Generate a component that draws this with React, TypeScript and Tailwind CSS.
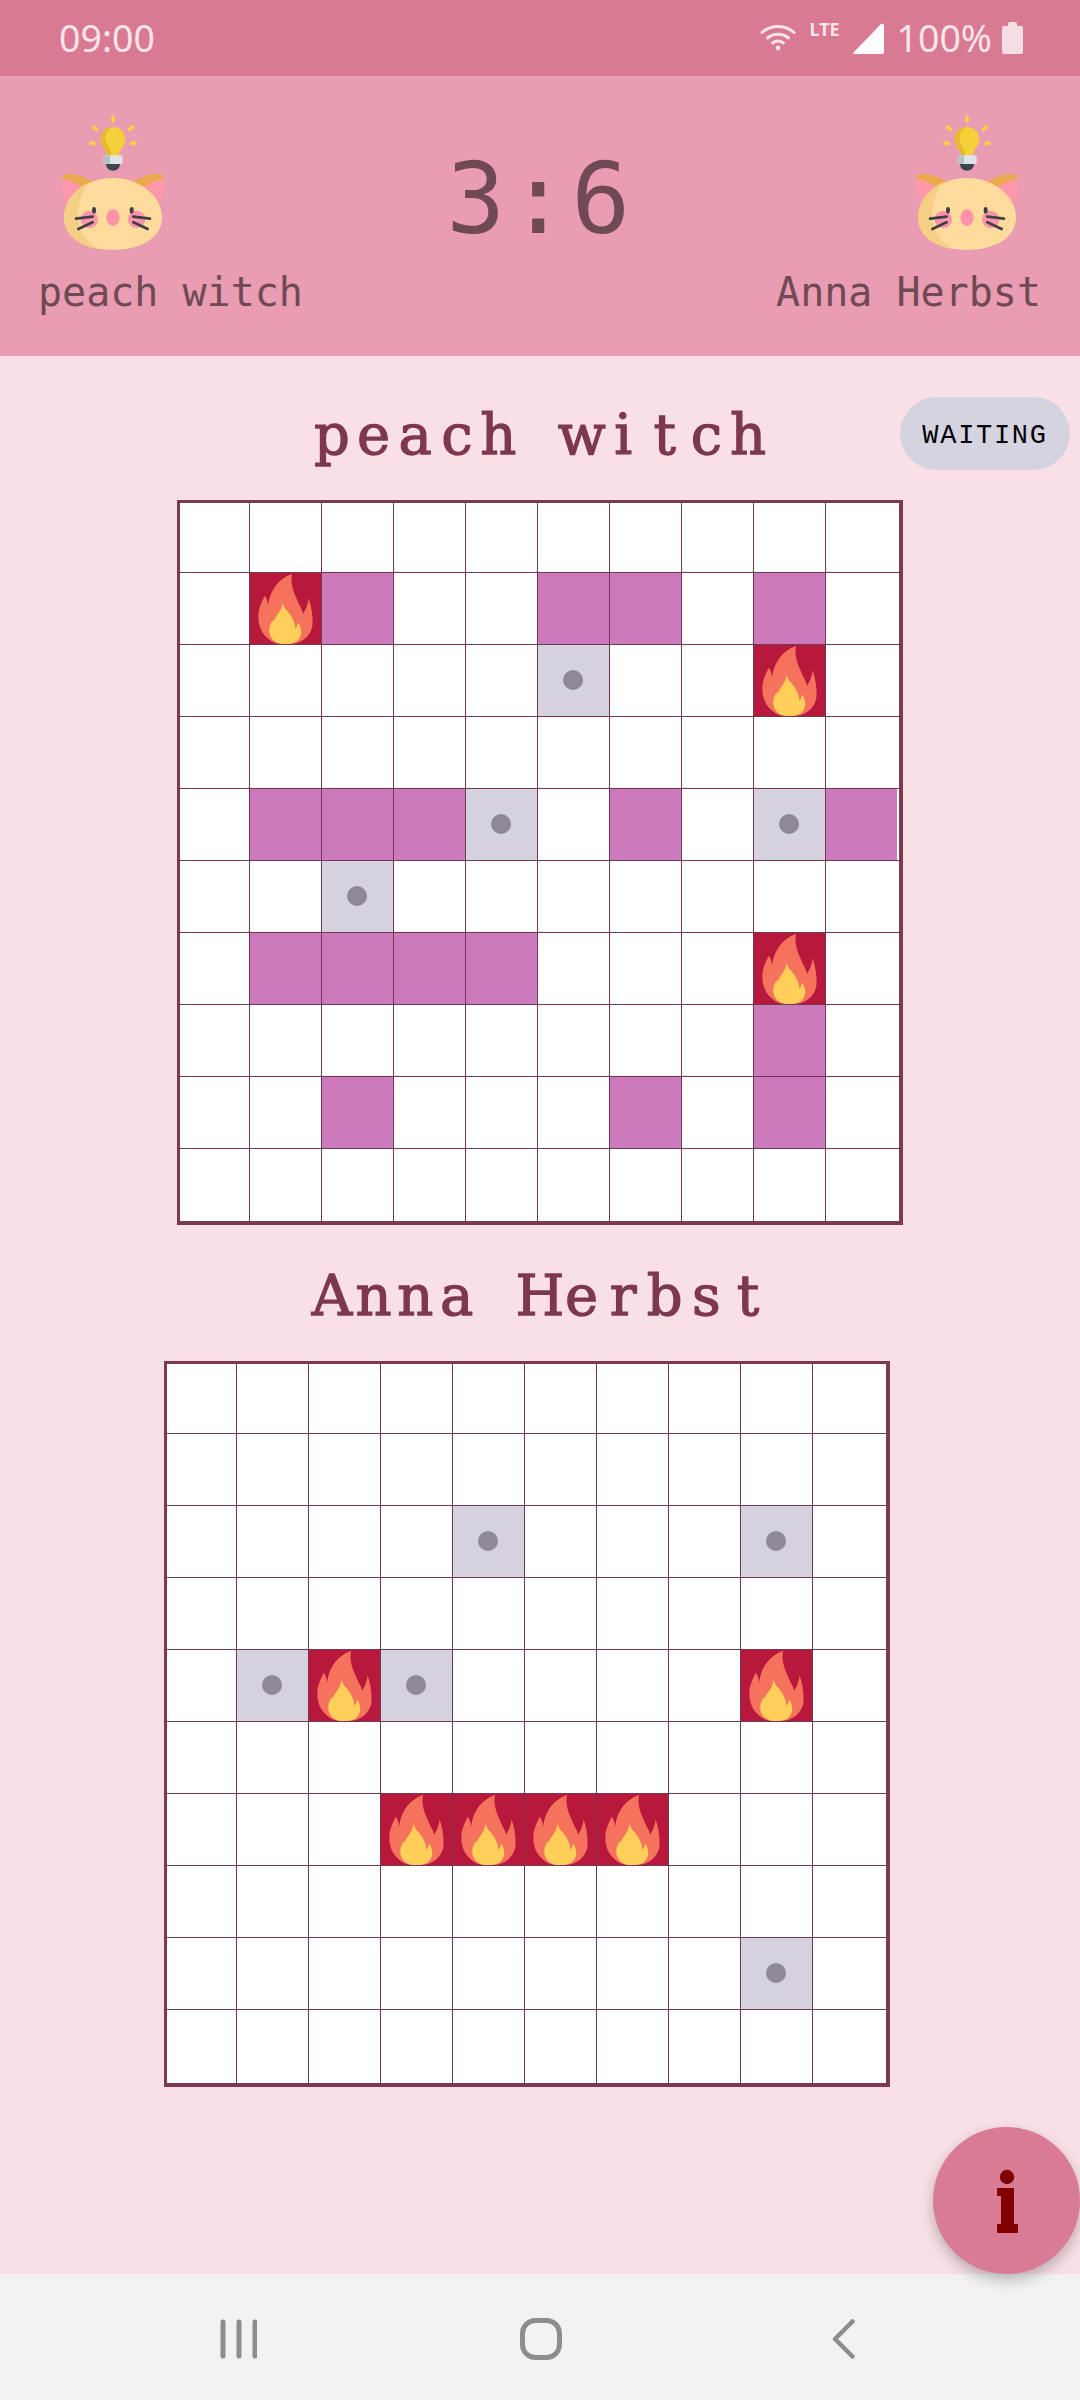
import React from "react";

type Cell = "." | "h" | "f" | "m";

const boardOne: string[] = [
  "..........",
  ".fh..hh.h.",
  ".....m..f.",
  "..........",
  ".hhhm.h.mh",
  "..m.......",
  ".hhhh...f.",
  "........h.",
  "..h...h.h.",
  "..........",
];

const boardTwo: string[] = [
  "..........",
  "..........",
  "....m...m.",
  "..........",
  ".mfm....f.",
  "..........",
  "...ffff...",
  "..........",
  "........m.",
  "..........",
];

function Flame() {
  return (
    <svg viewBox="0 0 72 72" className="block w-full h-full">
      <path
        d="M42.7 1 C30 5 20 17 18.5 33 C18 29 17 26 15 23 C11 31 8.5 36 8.5 45 C8.5 60 20 72 33 72 L40 72 C54 72 63.5 62 63.5 50 C63.5 41 62 33 59.5 26 C58.5 32 56.5 37 54 41 C52.5 36 49 31 46 23 C43 16 41 9 42.7 1 Z"
        fill="#f5735c"
      />
      <path
        d="M32.7 30 C33 38 27 42 24.5 48 C24 49 23.5 49 23 48 C21 51 19.5 54 19.5 58 C19.5 66 25 72 34 72 L38 72 C47 72 52 66 52 60 C52 56 50.5 53 49 50 C48.5 53 47.5 55 46 56 C45.5 50 43 45 40 41 C37 38 34 35 32.7 30 Z"
        fill="#ffcf5a"
      />
    </svg>
  );
}

function GridCell({ kind, row, col }: { kind: Cell; row: number; col: number }) {
  const edgeR = col === 9 ? "" : "border-r";
  const edgeB = row === 9 ? "" : "border-b";
  const fillWidth = col === 9 ? "w-[71px]" : "w-full";
  return (
    <div className={`bg-white border-[#6f3a50] min-w-0 min-h-0 ${edgeR} ${edgeB}`}>
      {kind === "h" && <div className={`h-full bg-[#cc7abc] ${fillWidth}`} />}
      {kind === "f" && (
        <div className={`h-full bg-[#b8183c] ${fillWidth}`}>
          <Flame />
        </div>
      )}
      {kind === "m" && (
        <div className={`h-full bg-[#d5d1df] flex items-center justify-center ${fillWidth}`}>
          <div className="w-5 h-5 mr-px mb-px rounded-full bg-[#8f8896]" />
        </div>
      )}
    </div>
  );
}

function Board({ rows, sizing }: { rows: string[]; sizing: string }) {
  return (
    <div
      className={`w-[726px] shrink-0 border-t-[3px] border-l-[3px] border-r-4 border-b-4 border-[#7c3a50] bg-white grid grid-cols-[70px_repeat(8,72px)_1fr] grid-rows-[70px_repeat(8,72px)_1fr] ${sizing}`}
    >
      {rows.map((r, y) =>
        r.split("").map((c, x) => <GridCell key={`${y}-${x}`} kind={c as Cell} row={y} col={x} />)
      )}
    </div>
  );
}

function CatAvatar() {
  return (
    <svg viewBox="0 150 450 450" className="block w-[150px] h-[150px]">
      <g fill="#f8cf45">
        <ellipse cx="219" cy="177" rx="6" ry="11" />
        <ellipse cx="165" cy="205" rx="6" ry="11" transform="rotate(-55 165 205)" />
        <ellipse cx="273" cy="205" rx="6" ry="11" transform="rotate(55 273 205)" />
        <ellipse cx="158" cy="250" rx="6" ry="11" transform="rotate(-80 158 250)" />
        <ellipse cx="280" cy="250" rx="6" ry="11" transform="rotate(80 280 250)" />
      </g>
      <path d="M219 201 C198 201 182 217 182 238 C182 258 200 268 202 288 L236 288 C238 268 256 258 256 238 C256 217 240 201 219 201 Z" fill="#f4d13a" />
      <path d="M219 201 C198 201 182 217 182 238 C182 258 200 268 202 288 L216 288 C212 262 196 252 196 232 C196 218 205 207 219 201 Z" fill="#e9b92c" />
      <rect x="190" y="286" width="58" height="26" rx="5" fill="#dfe3e5" />
      <path d="M190 291 a5 5 0 0 1 5 -5 L210 286 L210 312 L195 312 a5 5 0 0 1 -5 -5 Z" fill="#b9c1c5" />
      <path d="M198 312 L240 312 C240 325 230 332 219 332 C208 332 198 325 198 312 Z" fill="#3f4653" />
      <path d="M68 346 C100 334 140 350 165 372 L90 436 C72 412 64 378 68 346 Z" fill="#eba94f" />
      <path d="M370 346 C338 334 298 350 273 372 L348 436 C366 412 374 378 370 346 Z" fill="#eba94f" />
      <path d="M70 356 C60 380 66 412 88 436 L135 388 C115 372 92 362 70 356 Z" fill="#fd99aa" />
      <path d="M368 356 C378 380 372 412 350 436 L303 388 C323 372 346 362 368 356 Z" fill="#fd99aa" />
      <path d="M219 354 C300 354 366 410 366 472 C366 535 300 570 219 570 C138 570 72 535 72 472 C72 410 138 354 219 354 Z" fill="#fddb9c" />
      <path d="M150 366 C105 384 72 428 72 472 C72 525 115 558 178 568 C140 545 114 510 114 465 C114 425 128 390 150 366 Z" fill="#f5cf85" />
      <ellipse cx="219" cy="473" rx="20" ry="25" fill="#fd93a9" />
      <circle cx="148" cy="478" r="26" fill="#fd93a9" />
      <circle cx="290" cy="478" r="26" fill="#fd93a9" />
      <ellipse cx="162" cy="451" rx="6" ry="10" fill="#3f4047" />
      <ellipse cx="275" cy="451" rx="6" ry="10" fill="#3f4047" />
      <g stroke="#3f4047" strokeWidth="8" strokeLinecap="round">
        <line x1="108" y1="476" x2="158" y2="470" />
        <line x1="115" y1="507" x2="158" y2="487" />
        <line x1="330" y1="476" x2="280" y2="470" />
        <line x1="323" y1="507" x2="280" y2="487" />
      </g>
    </svg>
  );
}

function StatusBar() {
  return (
    <div className="h-[76px] shrink-0 bg-[#d77a92] flex items-center justify-between pl-[59px] pr-[57px] text-[#fbe3ea] text-[37.5px] font-['Noto_Sans',sans-serif]">
      <span className="leading-none">09:00</span>
      <div className="flex items-center">
        <svg viewBox="0 0 36 28" className="w-9 h-7 mr-[13px] mb-[3px]" fill="none" stroke="#fbe3ea" strokeWidth="3" strokeLinecap="round">
          <path d="M2 9.5 C11 1.5 25 1.5 34 9.5" />
          <path d="M7.5 15 C13.5 10 22.5 10 28.5 15" />
          <path d="M12.5 20 C16 17.5 20 17.5 23.5 20" />
          <circle cx="18" cy="25" r="2.4" fill="#fbe3ea" stroke="none" />
        </svg>
        <span className="text-[18px] font-bold leading-none mb-[18px] w-[44px]">LTE</span>
        <svg viewBox="0 0 31 31" className="w-[31px] h-[31px] mr-3">
          <path d="M31 2 L31 29 A2 2 0 0 1 29 31 L2 31 A1 1 0 0 1 1 29 L28 1 A2 2 0 0 1 31 2 Z" fill="#ffffff" />
        </svg>
        <span className="leading-none">100%</span>
        <svg viewBox="0 0 21 32" className="w-[21px] h-8 ml-[10px]">
          <path d="M6 2 a2 2 0 0 1 2 -2 h5 a2 2 0 0 1 2 2 v2 h4 a2 2 0 0 1 2 2 v24 a2 2 0 0 1 -2 2 h-17 a2 2 0 0 1 -2 -2 v-24 a2 2 0 0 1 2 -2 h4 Z" fill="#f6dde4" />
        </svg>
      </div>
    </div>
  );
}

function Header() {
  return (
    <div className="relative h-[280px] shrink-0 bg-[#e99cb2] flex justify-between text-[#6f4a55] font-['DejaVu_Sans_Mono',monospace] pl-[38px] pr-[39px]">
      <div className="flex flex-col items-start pt-[34px]">
        <div className="ml-[2px]">
          <CatAvatar />
        </div>
        <span className="text-[40px] leading-[48px] mt-[8px]">peach witch</span>
      </div>
      <div className="absolute left-0 right-0 top-[74px] text-center text-[98px] tracking-[3.5px] leading-none pointer-events-none">
        3:6
      </div>
      <div className="flex flex-col items-end pt-[34px]">
        <div className="mr-[-3px]">
          <CatAvatar />
        </div>
        <span className="text-[40px] leading-[48px] mt-[8px]">Anna Herbst</span>
      </div>
    </div>
  );
}

function Title({ text, sizing }: { text: string; sizing: string }) {
  return (
    <div className={`shrink-0 flex justify-center text-[#7d3850] text-[56px] leading-none [-webkit-text-stroke:1.3px_#7d3850] font-['DejaVu_Serif',serif] ${sizing}`}>
      {text.split("").map((ch, i) => (
        <span key={i} className="w-[41.6px] flex justify-center whitespace-pre">
          {ch}
        </span>
      ))}
    </div>
  );
}

export default function App() {
  return (
    <div className="relative w-[1080px] h-[2400px] overflow-hidden flex flex-col bg-[#f9e0e7]">
      <StatusBar />
      <Header />
      <div className="relative flex-1 flex flex-col">
        <div className="relative">
          <Title text="peach witch" sizing="h-[144px] pt-[51px]" />
          <div className="absolute left-[900px] top-[41px] w-[170px] h-[73px] pt-[5px] rounded-full bg-[#d6d3e0] flex items-center justify-center text-black text-[27px] tracking-[1.7px] font-['Liberation_Mono',monospace]">
            WAITING
          </div>
        </div>
        <Board rows={boardOne} sizing="h-[725px] ml-[177px]" />
        <Title text="Anna Herbst" sizing="h-[136px] pt-[43px]" />
        <Board rows={boardTwo} sizing="h-[726px] ml-[164px]" />
      </div>
      <div className="h-[126px] shrink-0 bg-[#f2f2f2] flex items-center pl-[220px] pt-[4px]">
        <svg viewBox="0 0 37 40" className="w-[37px] h-10" stroke="#8d8d8d" strokeWidth="5" strokeLinecap="round">
          <line x1="3" y1="3" x2="3" y2="37" />
          <line x1="19" y1="3" x2="19" y2="37" />
          <line x1="35" y1="3" x2="35" y2="37" />
        </svg>
        <svg viewBox="0 0 42 42" className="w-[42px] h-[42px] ml-[263px]" fill="none" stroke="#8d8d8d" strokeWidth="5">
          <rect x="2.5" y="2.5" width="37" height="37" rx="13" />
        </svg>
        <svg viewBox="0 0 23 40" className="w-[23px] h-10 ml-[270px]" fill="none" stroke="#8d8d8d" strokeWidth="4.5" strokeLinecap="round" strokeLinejoin="round">
          <path d="M20.5 2.5 L3 20 L20.5 37.5" />
        </svg>
      </div>
      <div className="absolute left-[933px] top-[2127px] w-[147px] h-[147px] rounded-full bg-[#d97b94] shadow-[0_6px_14px_rgba(0,0,0,0.25)] flex items-center justify-center">
        <svg viewBox="0 0 146 146" className="w-[146px] h-[146px]">
          <circle cx="73" cy="49" r="7.2" fill="#800000" />
          <path d="M64 60 L80 60 L80 96 L83 96 Q84 96 84 97 L84 104 Q84 105 83 105 L64 105 Q63 105 63 104 L63 97 Q63 96 64 96 L67 96 L67 68 L64 68 Q63 68 63 67 L63 61 Q63 60 64 60 Z" fill="#800000" />
        </svg>
      </div>
    </div>
  );
}
